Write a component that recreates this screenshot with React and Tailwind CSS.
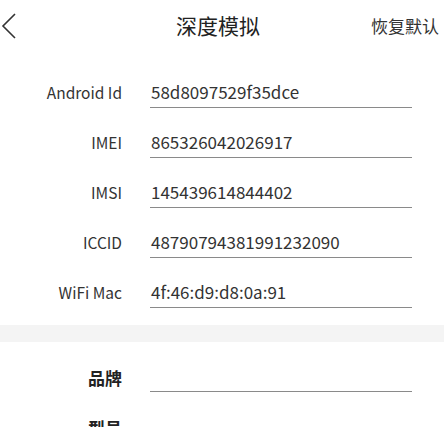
import React from 'react';

const font = { fontFamily: '"Noto Sans CJK SC", "Noto Sans", sans-serif' };

const Row = ({ label, value, bold }) => (
  <div className="flex items-end h-[50px]">
    <div
      className={`w-[122px] text-right leading-[24px] ${bold ? 'pb-[2px] text-[17px] font-bold text-[#222]' : 'pb-[4px] text-[15.5px] text-[#333]'}`}
    >
      {label}
    </div>
    <div className="ml-[28px] w-[262px] border-b border-[#8a8a8a] pb-[3px] leading-[24px] text-[17px] text-[#333] pl-[1px]">
      {value || '\u00a0'}
    </div>
  </div>
);

const App = () => {
  const device = [
    { label: 'Android Id', value: '58d8097529f35dce' },
    { label: 'IMEI', value: '865326042026917' },
    { label: 'IMSI', value: '145439614844402' },
    { label: 'ICCID', value: '48790794381991232090' },
    { label: 'WiFi Mac', value: '4f:46:d9:d8:0a:91' },
  ];

  return (
    <div className="w-[444px] h-[427px] bg-white overflow-hidden" style={font}>
      {/* header */}
      <div className="flex items-center h-[52px]">
        <div className="w-[66px] pl-[1px] flex items-center">
          <svg width="16" height="28" viewBox="0 0 16 28" fill="none">
            <polyline points="14,2 2,14 14,26" stroke="#333" strokeWidth="1.6" strokeLinejoin="miter" />
          </svg>
        </div>
        <div className="flex-1 text-center text-[21px] text-[#222]">深度模拟</div>
        <div className="w-[74px] pr-[5px] text-right text-[17px] text-[#333]">恢复默认</div>
      </div>

      {/* device ids */}
      <div className="pt-[6px]">
        {device.map((d, i) => (
          <Row key={i} label={d.label} value={d.value} />
        ))}
      </div>

      <div className="mt-[17px] h-[17px] bg-[#f4f4f4]"></div>

      {/* brand / model */}
      <div>
        <Row label="品牌" bold />
        <div className="flex items-end h-[50px]">
          <div className="w-[122px] text-right leading-[24px] pb-[2px] text-[17px] font-bold text-[#222]">型号</div>
        </div>
      </div>
    </div>
  );
};

export default App;
